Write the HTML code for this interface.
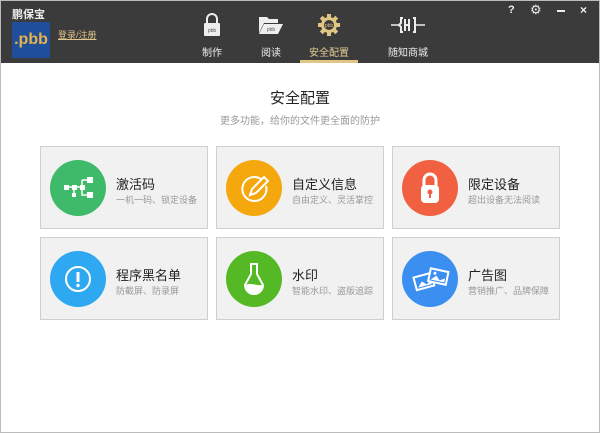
<!DOCTYPE html>
<html><head><meta charset="utf-8"><style>
*{margin:0;padding:0;box-sizing:border-box}
body{width:600px;height:433px;background:#fff;font-family:"Liberation Sans","Noto Sans CJK SC",sans-serif;position:relative;overflow:hidden}
.frame{position:absolute;left:0;top:0;width:600px;height:433px;border:1px solid #bbb;pointer-events:none}
.hdr{position:absolute;left:0;top:0;width:600px;height:63px;background:#3b3b3b}
.abs{position:absolute}
.card{position:absolute;width:168px;height:83px;background:#f1f1f1;border:1px solid #cfcfcf}
.circ{position:absolute;left:9px;top:13px;width:56px;height:56px;border-radius:50%}
.t{position:absolute;left:75px;top:27px;font-size:13px;color:#222;white-space:nowrap}
.s{position:absolute;left:75px;top:46px;font-size:9px;color:#999;white-space:nowrap}
.tab{position:absolute;top:44px;font-size:10px;color:#eee;white-space:nowrap}
</style></head><body>
<div class="hdr">
<div class="abs" style="left:12px;top:6px;font-size:11px;color:#eee;font-weight:bold">鹏保宝</div>
<div class="abs" style="left:12px;top:22px;width:38px;height:36px;background:#1f4e9a;color:#e8b24a;font-size:16px;font-weight:bold;line-height:36px;text-align:center">.pbb</div>
<div class="abs" style="left:58px;top:28px;font-size:9px;color:#e0c68c;text-decoration:underline">登录/注册</div>
<svg class="abs" style="left:203px;top:13px" width="18" height="24" viewBox="0 0 18 24"><path d="M4 10V6a5 5 0 0110 0v4" stroke="#eee" stroke-width="2" fill="none"/><rect x="1" y="10" width="16" height="13" rx="1" fill="#eee"/><text x="9" y="19" font-size="5" text-anchor="middle" fill="#555">pbb</text></svg>
<div class="tab" style="left:202px">制作</div>
<svg class="abs" style="left:258px;top:15px" width="26" height="20" viewBox="0 0 26 20"><path d="M1 2h8l2 2h9v4H6L1 18z" fill="#eee"/><path d="M6 9h19l-5 10H1z" fill="#eee"/><text x="13" y="16" font-size="5" text-anchor="middle" fill="#555">pbb</text></svg>
<div class="tab" style="left:261px">阅读</div>
<svg class="abs" style="left:317px;top:13px" width="24" height="24" viewBox="0 0 24 24"><g fill="#e0c685"><circle cx="12" cy="12" r="8"/><rect x="10" y="1" width="4" height="22"/><rect x="1" y="10" width="22" height="4"/><rect x="10" y="1" width="4" height="22" transform="rotate(45 12 12)"/><rect x="10" y="1" width="4" height="22" transform="rotate(-45 12 12)"/></g><circle cx="12" cy="12" r="5" fill="#3b3b3b"/><text x="12" y="14" font-size="5" text-anchor="middle" fill="#e0c685">pbb</text></svg>
<div class="tab" style="left:309px;color:#e6cf96">安全配置</div>
<div class="abs" style="left:300px;top:60px;width:58px;height:3px;background:#e0c685"></div>
<svg class="abs" style="left:391px;top:16px" width="34" height="18" viewBox="0 0 34 18"><path d="M0 9h9M25 9h9" stroke="#eee" stroke-width="1.5"/><path d="M12 2h-2v5l-2 2 2 2v5h2M14 3v12M14 9h4M18 3v12M22 2h2v14h-2" stroke="#eee" stroke-width="2" fill="none"/></svg>
<div class="tab" style="left:388px">随知商城</div>
<div class="abs" style="left:508px;top:4px;font-size:11px;color:#eee;font-weight:bold">?</div>
<div class="abs" style="left:530px;top:2px;font-size:13px;color:#eee">⚙</div>
<div class="abs" style="left:557px;top:10px;width:8px;height:2px;background:#eee"></div>
<div class="abs" style="left:580px;top:3px;font-size:12px;color:#eee;font-weight:bold">×</div>
</div>
<div class="abs" style="left:0;top:87px;width:600px;text-align:center;font-size:15px;color:#222">安全配置</div>
<div class="abs" style="left:0;top:112px;width:600px;text-align:center;font-size:10px;color:#999">更多功能，给你的文件更全面的防护</div>

<div class="card" style="left:40px;top:146px"><div class="circ" style="background:#3fba6a"></div>
<svg class="abs" style="left:21px;top:27px" width="32" height="28" viewBox="0 0 32 28"><g fill="#fff"><rect x="2" y="11" width="5" height="5"/><rect x="10" y="11" width="5" height="5"/><rect x="18" y="11" width="5" height="5"/><rect x="25" y="3" width="6" height="6"/><rect x="25" y="18" width="6" height="6"/><rect x="10" y="19" width="4" height="4"/></g><path d="M7 13h11M20 6v7M20 6h5M20 16v5h5M12 16v4" stroke="#fff" stroke-width="1.5" fill="none"/></svg>
<div class="t">激活码</div><div class="s">一机一码、锁定设备</div></div>

<div class="card" style="left:216px;top:146px"><div class="circ" style="background:#f5a80d"></div>
<svg class="abs" style="left:22px;top:26px" width="32" height="32" viewBox="0 0 32 32"><path d="M22 6A12 12 0 1 0 27 13" stroke="#fff" stroke-width="2" fill="none"/><path d="M11 22l2-6 12-12 4 4-12 12z" stroke="#fff" stroke-width="2" fill="none"/></svg>
<div class="t">自定义信息</div><div class="s">自由定义、灵活掌控</div></div>

<div class="card" style="left:392px;top:146px"><div class="circ" style="background:#f26042"></div>
<svg class="abs" style="left:27px;top:24px" width="20" height="34" viewBox="0 0 20 34"><path d="M4 15V9a6 6 0 0112 0v6" stroke="#fff" stroke-width="3" fill="none"/><rect x="1" y="14" width="18" height="18" rx="4" fill="#fff"/><circle cx="10" cy="21" r="2.5" fill="#f26042"/><rect x="9" y="21" width="2" height="6" fill="#f26042"/></svg>
<div class="t">限定设备</div><div class="s">超出设备无法阅读</div></div>

<div class="card" style="left:40px;top:237px"><div class="circ" style="background:#2fa8f2"></div>
<svg class="abs" style="left:23px;top:27px" width="28" height="28" viewBox="0 0 28 28"><circle cx="14" cy="14" r="12" stroke="#fff" stroke-width="2" fill="none"/><rect x="12.5" y="7" width="3" height="10" fill="#fff"/><circle cx="14" cy="20.5" r="1.7" fill="#fff"/></svg>
<div class="t">程序黑名单</div><div class="s">防截屏、防录屏</div></div>

<div class="card" style="left:216px;top:237px"><div class="circ" style="background:#54b924"></div>
<svg class="abs" style="left:26px;top:24px" width="22" height="34" viewBox="0 0 22 34"><path d="M7 2h8M8 2v10L2 23a8 8 0 1018 0L14 12V2" stroke="#fff" stroke-width="2" fill="none"/><path d="M3 23c4-3 10 1 16 0a8 8 0 01-16 0z" fill="#fff"/></svg>
<div class="t">水印</div><div class="s">智能水印、盗版追踪</div></div>

<div class="card" style="left:392px;top:237px"><div class="circ" style="background:#3b8ff0"></div>
<svg class="abs" style="left:19px;top:28px" width="38" height="28" viewBox="0 0 38 28"><g transform="rotate(-15 12 16)"><rect x="3" y="9" width="18" height="13" stroke="#fff" stroke-width="2" fill="none"/><path d="M5 20l5-5 4 4 5-3v4z" fill="#fff"/></g><g transform="rotate(12 26 12)"><rect x="17" y="4" width="18" height="13" stroke="#fff" stroke-width="2" fill="#3b8ff0"/><path d="M19 15l5-5 4 4 5-3v4z" fill="#fff"/><circle cx="22" cy="8" r="1.5" fill="#fff"/></g></svg>
<div class="t">广告图</div><div class="s">营销推广、品牌保障</div></div>
<div class="frame"></div>
</body></html>
